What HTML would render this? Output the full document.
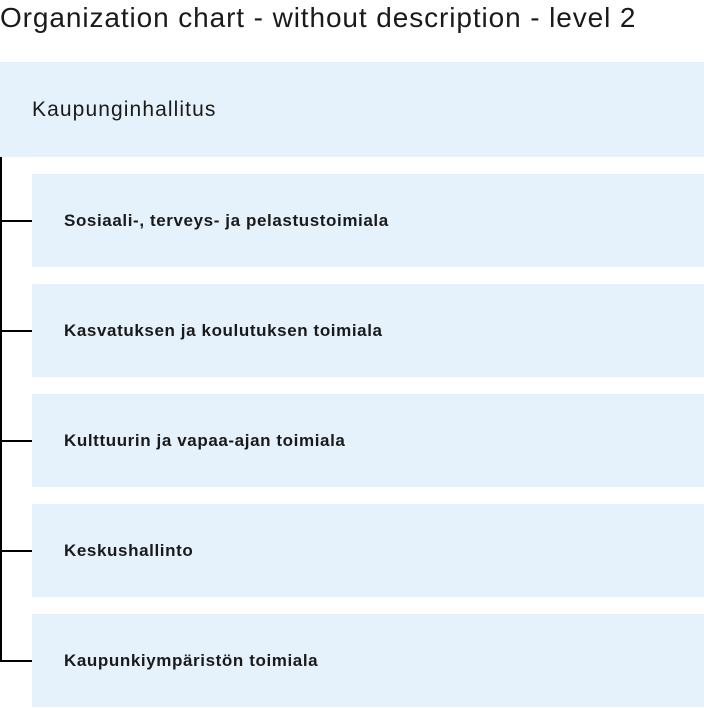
<!DOCTYPE html>
<html><head><meta charset="utf-8"><style>
*{margin:0;padding:0;box-sizing:border-box}
body{width:704px;height:708px;background:#fff;font-family:"Liberation Sans",sans-serif;color:#1a1a1a;position:relative;overflow:hidden}
h1{position:absolute;left:0;top:2px;font-size:28px;font-weight:400;letter-spacing:0.9px;white-space:nowrap}
.p{position:absolute;left:0;top:62px;width:704px;height:95px;background:#e6f2fb;font-size:21px;padding-left:32px;line-height:95px;letter-spacing:1.1px}
.c{position:absolute;left:32px;width:672px;height:93px;background:#e6f2fb;font-size:17px;font-weight:700;padding-left:32px;line-height:93px;letter-spacing:0.6px}
.v{position:absolute;left:0;top:157px;width:2px;height:505px;background:#000}
.h{position:absolute;left:0;width:32px;height:2px;background:#000}
</style></head><body>
<h1>Organization chart - without description - level 2</h1>
<div class="p">Kaupunginhallitus</div>
<div class="v"></div>
<div class="h" style="top:220px"></div>
<div class="h" style="top:330px"></div>
<div class="h" style="top:440px"></div>
<div class="h" style="top:550px"></div>
<div class="h" style="top:660px"></div>
<div class="c" style="top:174px">Sosiaali-, terveys- ja pelastustoimiala</div>
<div class="c" style="top:284px">Kasvatuksen ja koulutuksen toimiala</div>
<div class="c" style="top:394px">Kulttuurin ja vapaa-ajan toimiala</div>
<div class="c" style="top:504px">Keskushallinto</div>
<div class="c" style="top:614px">Kaupunkiympäristön toimiala</div>
</body></html>
